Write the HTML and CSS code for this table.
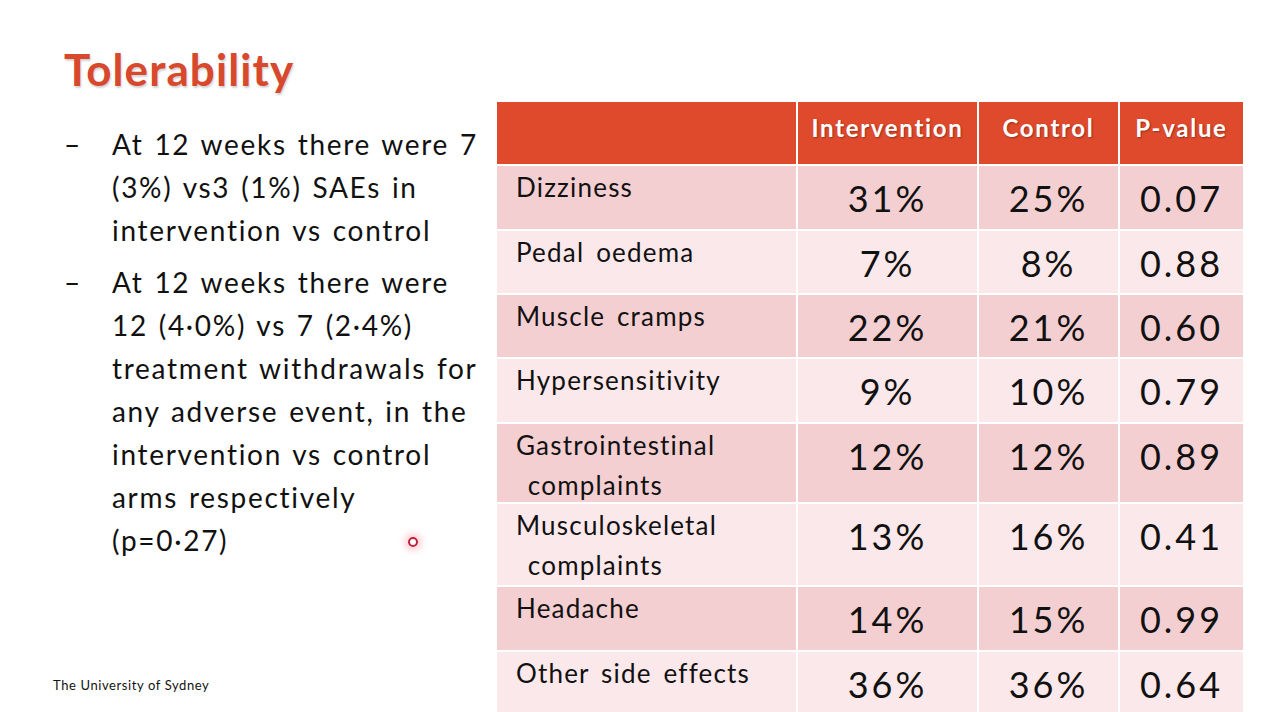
FILE: index.html
```html
<!DOCTYPE html>
<html>
<head>
<meta charset="utf-8">
<link rel="stylesheet" href="styles.css">
</head>
<body>
<div class="slide">
  <div class="left">
    <h1 class="title">Tolerability</h1>
    <ul class="bullets">
      <li><span class="dash">–</span><span class="btext">At 12 weeks there were 7<br>(3%) vs3 (1%) SAEs in<br>intervention vs control</span></li>
      <li><span class="dash">–</span><span class="btext">At 12 weeks there were<br>12 (4·0%) vs 7 (2·4%)<br>treatment withdrawals for<br>any adverse event, in the<br>intervention vs control<br>arms respectively<br>(p=0·27)</span></li>
    </ul>
    <div class="footer">The University of Sydney</div>
  </div>
  <div class="table">
    <div class="th"></div>
    <div class="th">Intervention</div>
    <div class="th">Control</div>
    <div class="th">P-value</div>

    <div class="c name dark">Dizziness</div><div class="c num dark">31%</div><div class="c num dark">25%</div><div class="c num dark">0.07</div>
    <div class="c name light">Pedal oedema</div><div class="c num light">7%</div><div class="c num light">8%</div><div class="c num light">0.88</div>
    <div class="c name dark">Muscle cramps</div><div class="c num dark">22%</div><div class="c num dark">21%</div><div class="c num dark">0.60</div>
    <div class="c name light">Hypersensitivity</div><div class="c num light">9%</div><div class="c num light">10%</div><div class="c num light">0.79</div>
    <div class="c name dark">Gastrointestinal<br>&nbsp;complaints</div><div class="c num dark">12%</div><div class="c num dark">12%</div><div class="c num dark">0.89</div>
    <div class="c name light">Musculoskeletal<br>&nbsp;complaints</div><div class="c num light">13%</div><div class="c num light">16%</div><div class="c num light">0.41</div>
    <div class="c name dark">Headache</div><div class="c num dark">14%</div><div class="c num dark">15%</div><div class="c num dark">0.99</div>
    <div class="c name light">Other side effects</div><div class="c num light">36%</div><div class="c num light">36%</div><div class="c num light">0.64</div>
  </div>
  <div class="cursor"></div>
</div>
</body>
</html>
```

FILE: styles.css
```css
html, body {
  margin: 0;
  padding: 0;
  background: #ffffff;
}
.slide {
  position: relative;
  width: 1267px;
  height: 712px;
  overflow: hidden;
  display: flex;
  font-family: "Lato", "DejaVu Sans", sans-serif;
  color: #111111;
}
.left {
  width: 497px;
  flex: none;
  display: flex;
  flex-direction: column;
  position: relative;
}
.title {
  margin: 41px 0 0 64px;
  font-size: 44px;
  font-weight: 700;
  color: #d8482d;
  text-shadow: 1px 2px 2px rgba(0,0,0,0.18);
  line-height: 56px;
  letter-spacing: 1.1px;
}
.bullets {
  list-style: none;
  margin: 26px 0 0 0;
  padding: 0;
  font-size: 28px;
  line-height: 43px;
}
.bullets li {
  display: flex;
}
.bullets li + li {
  margin-top: 9px;
}
.dash {
  width: 48px;
  padding-left: 64px;
  flex: none;
}
.btext {
  width: 385px;
  white-space: nowrap;
  letter-spacing: 1.7px;
  word-spacing: 2px;
}
.footer {
  margin-top: auto;
  margin-left: 53px;
  margin-bottom: 19px;
  font-size: 13px;
  letter-spacing: 0.6px;
}
.table {
  margin-top: 102px;
  display: grid;
  grid-template-columns: 299px 179px 139px 123px;
  grid-template-rows: 62px 63px 62px 62px 63px 78px 81px 63px 62px;
  gap: 2px;
  align-self: flex-start;
}
.th {
  background: #e04a2c;
  color: #ffffff;
  font-weight: 700;
  font-size: 24px;
  text-align: center;
  padding-top: 11px;
  letter-spacing: 1.7px;
  text-shadow: 1px 1px 2px rgba(0,0,0,0.35);
  box-sizing: border-box;
}
.c {
  box-sizing: border-box;
}
.dark { background: #f4cfd2; }
.light { background: #fbe8ea; }
.name {
  font-size: 26px;
  line-height: 40px;
  padding: 1px 0 0 19px;
  letter-spacing: 1.2px;
  word-spacing: 4px;
}
.num {
  font-size: 36px;
  text-align: center;
  padding-top: 10px;
  line-height: 44px;
  letter-spacing: 3px;
}
.cursor {
  position: absolute;
  left: 408px;
  top: 537px;
  width: 6px;
  height: 6px;
  border: 2px solid #c0203a;
  border-radius: 50%;
  box-shadow: 0 0 6px 4px rgba(255,80,100,0.25);
}
```
